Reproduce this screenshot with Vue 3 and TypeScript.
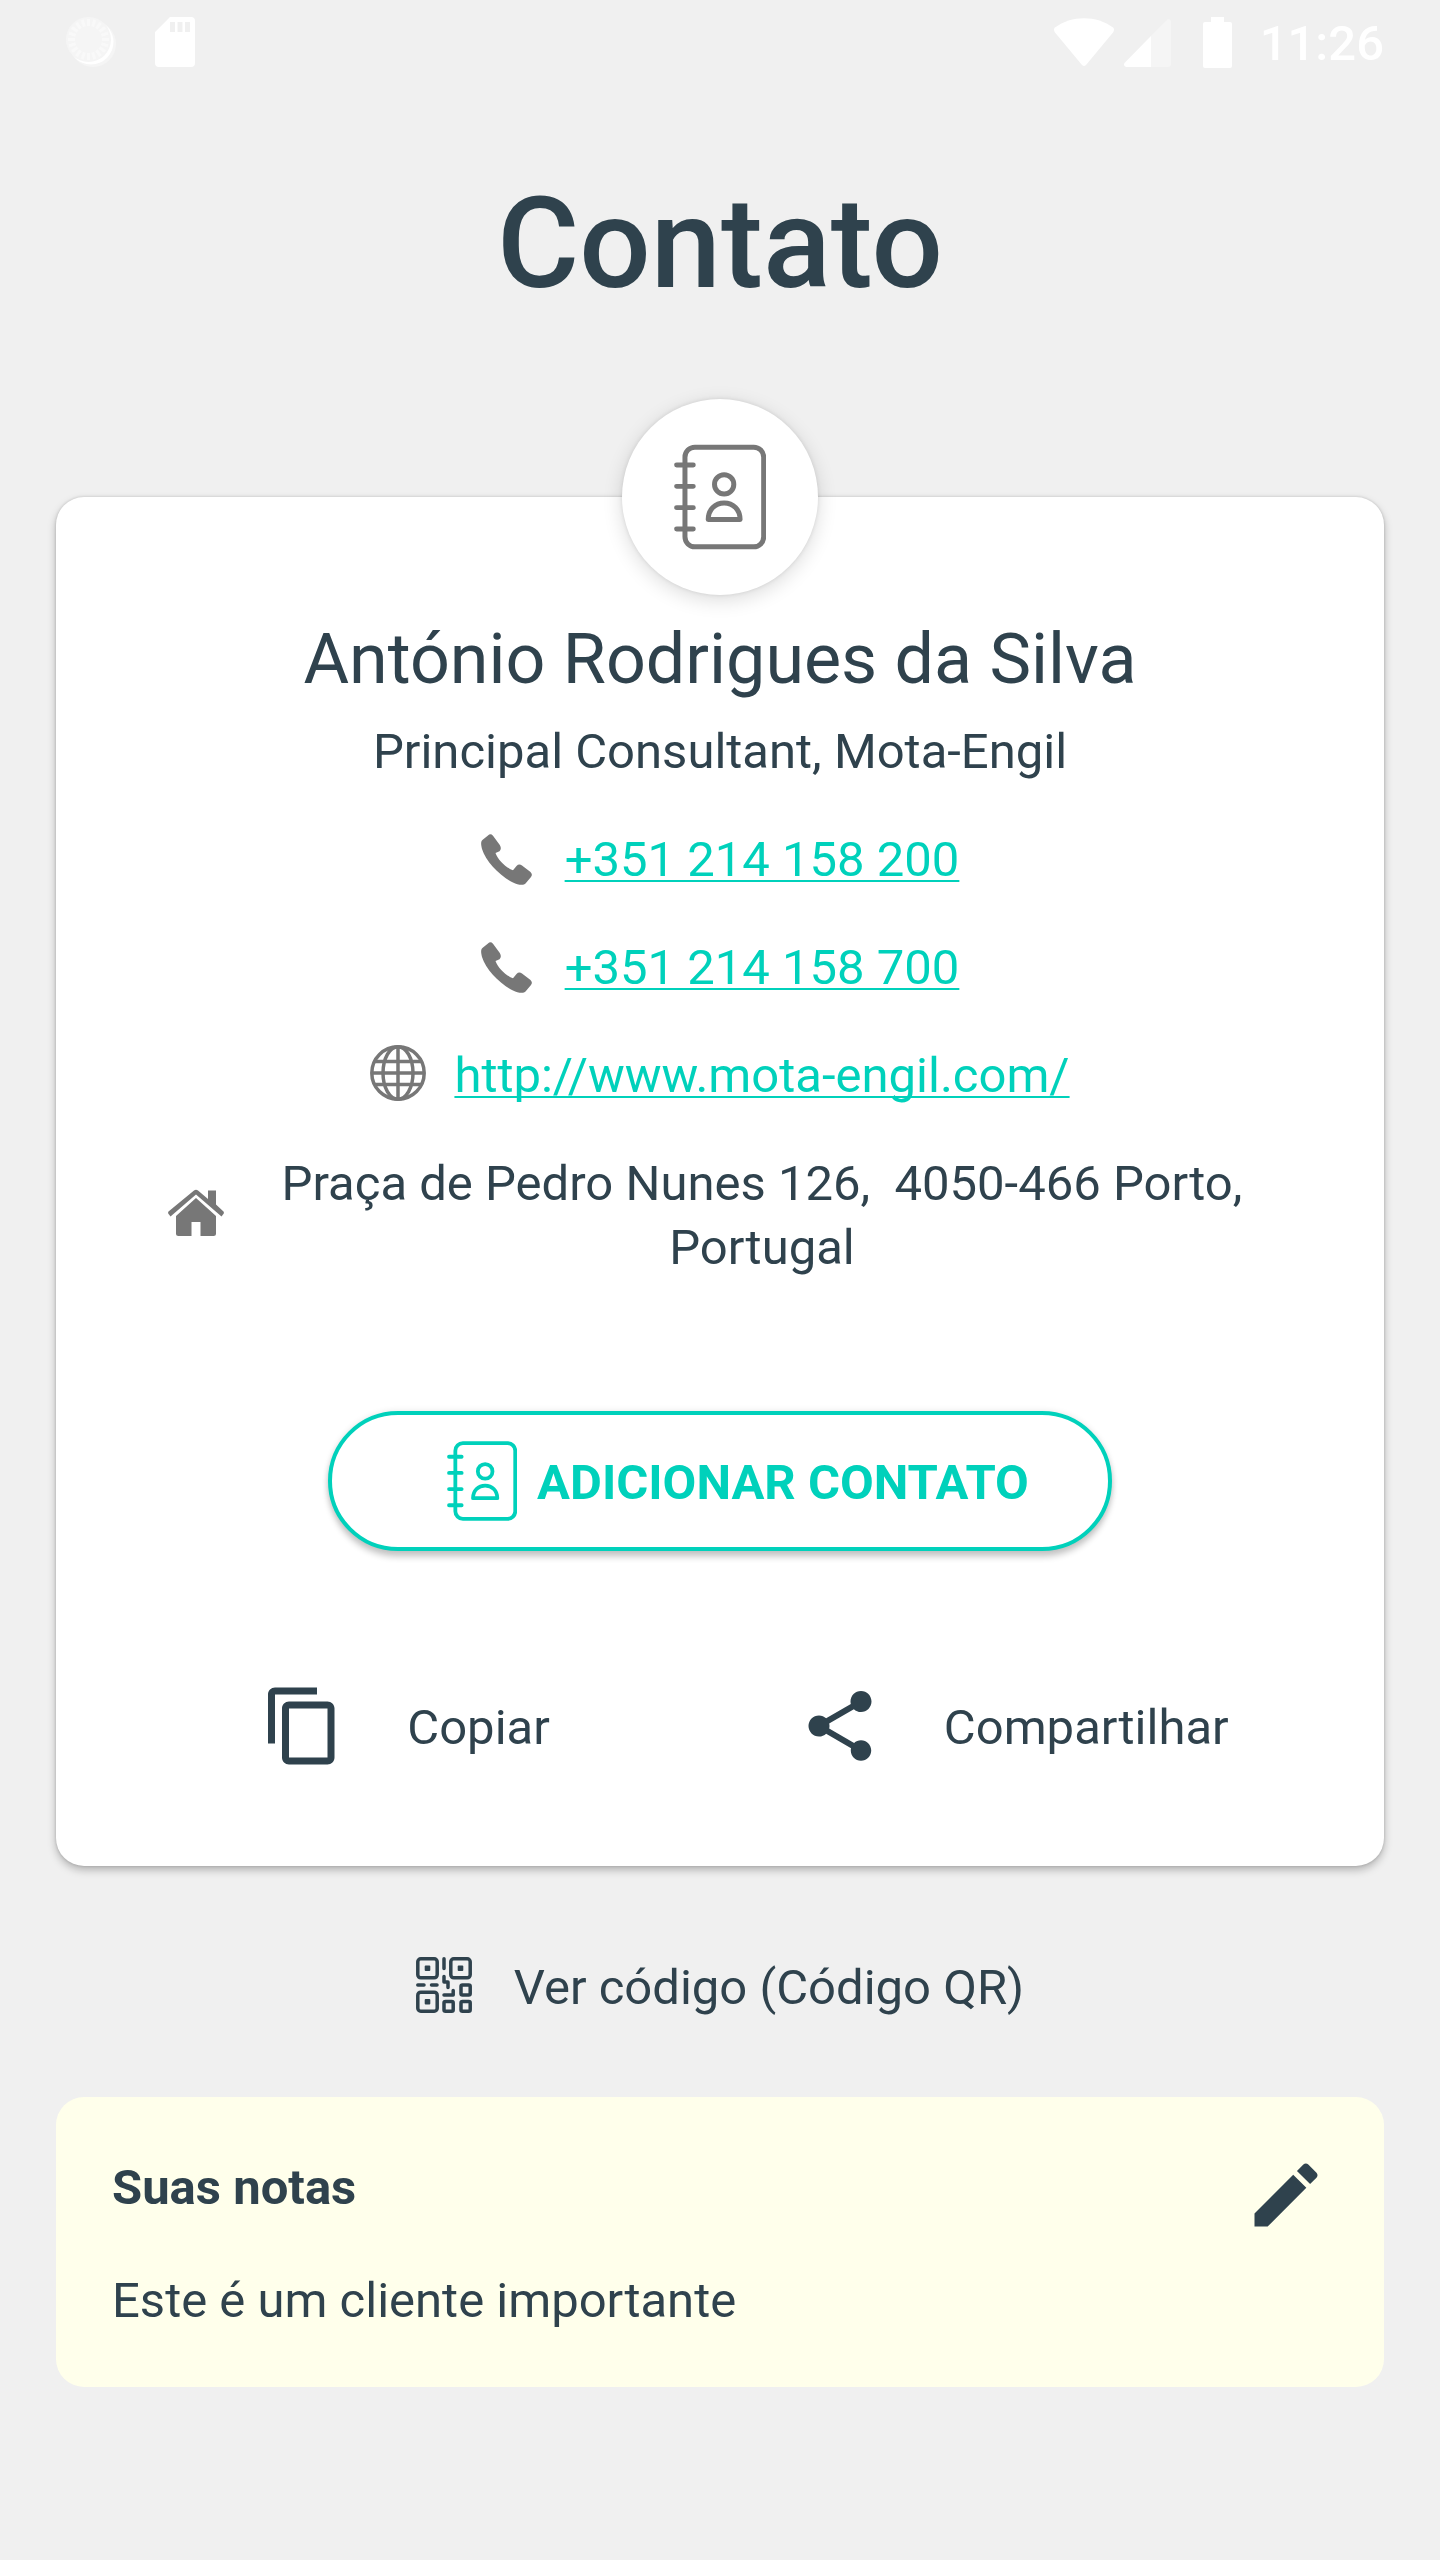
<script setup lang="ts">
import { ref } from 'vue'

interface Phone {
  label: string
  href: string
}

const contact = {
  name: 'António Rodrigues da Silva',
  role: 'Principal Consultant, Mota-Engil',
  website: 'http://www.mota-engil.com/',
  address: 'Praça de Pedro Nunes 126,\u00a0 4050-466 Porto, Portugal',
}

const phones: Phone[] = [
  { label: '+351 214 158 200', href: 'tel:+351214158200' },
  { label: '+351 214 158 700', href: 'tel:+351214158700' },
]

const note = ref('Este é um cliente importante')

// Tick angles of the sync spinner in the status bar
const ticks: number[] = Array.from({ length: 20 }, (_, i) => i * 18)
</script>

<template>
  <div class="screen">
    <header class="status">
      <svg class="spinner" viewBox="0 0 50 50" aria-hidden="true">
        <circle cx="27" cy="27" r="23" fill="#f5f5f5" />
        <circle cx="25" cy="25" r="22.500" fill="#fff" />
        <circle cx="22.500" cy="22.500" r="22.500" fill="#f5f5f5" />
        <path
          v-for="angle in ticks"
          :key="angle"
          d="M22.5 2v7"
          stroke="#f9f9f9"
          stroke-width="3"
          :transform="`rotate(${angle} 22.5 22.5)`"
        />
      </svg>
      <svg class="sd" viewBox="0 0 40 50" aria-hidden="true">
        <path
          fill="#fff"
          fill-rule="evenodd"
          d="M15 0H36Q40 0 40 4V46Q40 50 36 50H4Q0 50 0 46V15ZM15 5V15H20V5ZM22.500 5V15H27.500V5ZM30 5V15H35V5Z"
        />
      </svg>
      <svg class="wifi" viewBox="0 0 60 48" aria-hidden="true">
        <path fill="#fff" d="M1 9.500C17-3 43-3 59 9.500Q61 11.500 59 14.500L32 47Q30 49 28 47L1 14.500Q-1 11.500 1 9.500Z" />
      </svg>
      <svg class="signal" viewBox="0 0 47 48" aria-hidden="true">
        <path fill="#f5f5f5" d="M27 17 44 0Q47 0 47 3V45Q47 48 44 48H27Z" />
        <path fill="#fff" d="M27 17V48H2Q-1 47 .5 44Z" />
      </svg>
      <svg class="battery" viewBox="0 0 29 51" aria-hidden="true">
        <path fill="#fff" d="M8 0H21V5H27Q29 5 29 7V49Q29 51 27 51H2Q0 51 0 49V7Q0 5 2 5H8Z" />
      </svg>
      <time class="clock">11:26</time>
    </header>

    <h1 class="title">Contato</h1>

    <main>
      <section class="card">
        <div class="badge">
          <svg class="badge-icon" viewBox="0 0 277 316" aria-hidden="true">
            <g fill="none" stroke="currentColor" stroke-width="15" stroke-linejoin="round" stroke-linecap="round">
              <rect x="33" y="8" width="237" height="300" rx="30" />
              <path d="M8 62H58M8 126H58M8 190H58M8 254H58" />
              <circle cx="151" cy="120" r="29" />
              <path d="M103 226C103 196 124 176 151 176S199 196 199 226Z" />
            </g>
          </svg>
        </div>

        <h2 class="name">{{ contact.name }}</h2>
        <p class="role">{{ contact.role }}</p>

        <div v-for="phone in phones" :key="phone.href" class="row">
          <svg class="icon" viewBox="0 0 56 56" aria-hidden="true">
            <path
              fill="currentColor"
              d="M7 6.500Q9.500 4 12 6.800L18.800 16Q21 20 18.500 22.200L14.500 24C17 31 24 38 32 41.300L35.500 37Q38 34.500 41 36.500L49.500 43Q52 45.500 50 48L44.500 54.500C43 56.500 37 56.200 32 53.500C19 47 5 33 1 20C-.5 14 0 12 2 10.500Z"
            />
          </svg>
          <a class="link" :href="phone.href">{{ phone.label }}</a>
        </div>

        <div class="row">
          <svg class="icon" viewBox="0 0 56 56" aria-hidden="true">
            <g fill="none" stroke="currentColor" stroke-width="3.500">
              <circle cx="28" cy="28" r="26.200" />
              <ellipse cx="28" cy="28" rx="15" ry="26.200" />
              <path d="M28 1V55M2 28H54M5 16.500H51M5 39.500H51" />
            </g>
          </svg>
          <a class="link" :href="contact.website">{{ contact.website }}</a>
        </div>

        <div class="row">
          <svg class="icon" viewBox="0 0 56 56" aria-hidden="true">
            <g fill="currentColor">
              <path d="M40 5.500H48V19.500L55.500 26.500Q56.500 28 55 29.500L53.500 31.500 28 9.500 2.500 31.500 1 29.500Q-.5 28 .5 26.500L26 5.500Q28 4 30 5.500L40 14Z" />
              <path d="M28 13 48 31V48.500Q48 51 45.500 51H32.500V37H23.500V51H10.500Q8 51 8 48.500V31Z" />
            </g>
          </svg>
          <address class="address">{{ contact.address }}</address>
        </div>

        <button class="add" type="button">
          <svg class="add-icon" viewBox="0 0 277 316" aria-hidden="true">
            <g fill="none" stroke="currentColor" stroke-width="15" stroke-linejoin="round" stroke-linecap="round">
              <rect x="33" y="8" width="237" height="300" rx="30" />
              <path d="M8 62H58M8 126H58M8 190H58M8 254H58" />
              <circle cx="151" cy="120" r="29" />
              <path d="M103 226C103 196 124 176 151 176S199 196 199 226Z" />
            </g>
          </svg>
          <span>ADICIONAR CONTATO</span>
        </button>

        <div class="actions">
          <button class="action" type="button">
            <svg class="action-icon" viewBox="0 0 24 24" aria-hidden="true">
              <path
                fill="currentColor"
                d="M16 1H4c-1.100 0-2 .9-2 2v14h2V3h12V1zm3 4H8c-1.100 0-2 .9-2 2v14c0 1.100.9 2 2 2h11c1.100 0 2-.9 2-2V7c0-1.100-.9-2-2-2zm0 16H8V7h11v14z"
              />
            </svg>
            <span>Copiar</span>
          </button>
          <button class="action" type="button">
            <svg class="action-icon" viewBox="0 0 24 24" aria-hidden="true">
              <path
                fill="currentColor"
                d="M18 16.080c-.76 0-1.440.3-1.960.77L8.910 12.700c.05-.23.09-.46.09-.7s-.04-.47-.09-.7l7.050-4.110c.54.5 1.250.81 2.040.81 1.660 0 3-1.340 3-3s-1.340-3-3-3-3 1.340-3 3c0 .24.04.47.09.7L8.040 9.810C7.500 9.310 6.790 9 6 9c-1.660 0-3 1.340-3 3s1.340 3 3 3c.79 0 1.500-.31 2.040-.81l7.120 4.160c-.05.21-.08.43-.08.65 0 1.610 1.310 2.920 2.920 2.920 1.610 0 2.920-1.310 2.920-2.920s-1.310-2.920-2.920-2.920z"
              />
            </svg>
            <span>Compartilhar</span>
          </button>
        </div>
      </section>

      <button class="qr" type="button">
        <svg class="icon qr-icon" viewBox="0 0 56 56" aria-hidden="true">
          <g fill="none" stroke="currentColor" stroke-width="3.500" stroke-linecap="round" stroke-linejoin="round">
            <rect x="1.800" y="1.800" width="19.400" height="19" rx="3" />
            <rect x="34.800" y="1.800" width="19.400" height="19" rx="3" />
            <rect x="1.800" y="35.200" width="19.400" height="19" rx="3" />
            <rect x="45" y="28" width="9.200" height="10" rx="1.500" />
            <rect x="28" y="44.500" width="9.200" height="9.700" rx="1.500" />
            <rect x="45" y="44.500" width="9.200" height="9.700" rx="1.500" />
            <path d="M28 1.800V11.500M1.800 28H8M15.500 28H21M28 19.500V25H32V30.500M28 38H37.200V33.500" />
          </g>
          <rect x="8.700" y="8.500" width="5.600" height="5.600" rx="1" fill="currentColor" />
          <rect x="41.700" y="8.500" width="5.600" height="5.600" rx="1" fill="currentColor" />
          <rect x="8.700" y="42" width="5.600" height="5.600" rx="1" fill="currentColor" />
        </svg>
        <span>Ver código (Código QR)</span>
      </button>

      <section class="notes">
        <div class="notes-head">
          <h3 class="notes-title">Suas notas</h3>
          <button class="edit" type="button" aria-label="Editar notas">
            <svg class="edit-icon" viewBox="0 0 24 24" aria-hidden="true">
              <path
                fill="currentColor"
                d="M3 17.250V21h3.750L17.810 9.940l-3.750-3.750L3 17.250zM20.710 7.040c.39-.39.39-1.020 0-1.410l-2.340-2.340c-.39-.39-1.020-.39-1.410 0l-1.830 1.830 3.750 3.750 1.830-1.830z"
              />
            </svg>
          </button>
        </div>
        <p class="notes-text">{{ note }}</p>
      </section>
    </main>
  </div>
</template>

<style>
body {
  margin: 0;
  background: #f0f0f0;
}
</style>

<style scoped>
.screen {
  min-height: 100vh;
  background: #f0f0f0;
  color: #2f424d;
  font-family: Roboto, 'Liberation Sans', sans-serif;
  font-size: 49px;
  line-height: 64px;
}

h1,
h2,
h3,
p {
  margin: 0;
}

button {
  padding: 0;
  border: 0;
  background: none;
  color: inherit;
  font: inherit;
  cursor: pointer;
}

svg {
  display: block;
  flex: none;
}

/* Status bar */
.status {
  display: flex;
  align-items: center;
  height: 84px;
  padding: 0 56px 0 66px;
  color: #fff;
}

.spinner {
  width: 50px;
  height: 50px;
  margin-right: 39px;
}

.sd {
  width: 40px;
  height: 50px;
}

.wifi {
  width: 60px;
  height: 48px;
  margin: 0 10px 0 auto;
}

.signal {
  width: 47px;
  height: 48px;
  margin-top: 2px;
}

.battery {
  width: 29px;
  height: 51px;
  margin: 0 28px 0 32px;
}

.clock {
  font-weight: 500;
  margin-top: 4px;
}

.title {
  margin-top: 86px;
  font-size: 126px;
  font-weight: 500;
  line-height: 148px;
  text-align: center;
}

/* Contact card */
.card {
  position: relative;
  display: flex;
  flex-direction: column;
  align-items: center;
  margin: 179px 56px 0;
  padding: 120px 112px 94px;
  border-radius: 28px;
  background: #fff;
  box-shadow: 0 4px 8px rgba(0, 0, 0, 0.26), 0 0 3px rgba(0, 0, 0, 0.16);
}

.badge {
  position: absolute;
  top: -98px;
  display: flex;
  align-items: center;
  justify-content: center;
  width: 196px;
  height: 196px;
  border-radius: 50%;
  background: #fff;
  color: #777;
  box-shadow: 0 5px 20px rgba(0, 0, 0, 0.14), 0 0 4px rgba(0, 0, 0, 0.1);
}

.badge-icon {
  width: 92px;
  height: 106px;
}

.name {
  font-size: 70px;
  font-weight: 400;
  line-height: 84px;
  text-align: center;
}

.role {
  margin-top: 19px;
  text-align: center;
}

.row {
  display: flex;
  align-items: center;
  align-self: stretch;
  justify-content: center;
  gap: 28px;
  margin-top: 44px;
}

.icon {
  width: 56px;
  height: 56px;
  margin-bottom: 6px;
  color: #777;
}

.link {
  color: #00d1bb;
  text-decoration: underline 2px;
  text-decoration-skip-ink: none;
  text-underline-offset: 4px;
}

.address {
  flex: 1;
  font-style: normal;
  text-align: center;
}

.add {
  display: flex;
  align-items: center;
  justify-content: center;
  gap: 20px;
  box-sizing: border-box;
  width: 784px;
  max-width: 100%;
  height: 140px;
  margin-top: 131px;
  padding: 4px 0 0 36px;
  border: 4px solid #00d1bb;
  border-radius: 70px;
  background: #fff;
  color: #00d1bb;
  font-weight: 700;
  box-shadow: 0 6px 6px rgba(0, 0, 0, 0.2), 0 0 6px rgba(0, 0, 0, 0.1);
}

.add-icon {
  width: 70px;
  height: 80px;
  margin-bottom: 4px;
}

.actions {
  display: flex;
  justify-content: center;
  gap: 248px;
  margin-top: 133px;
  padding-left: 50px;
}

.action {
  display: flex;
  align-items: center;
  gap: 62px;
}

.action-icon {
  width: 84px;
  height: 84px;
  margin-bottom: 4px;
}

/* QR code */
.qr {
  display: flex;
  align-items: center;
  gap: 42px;
  margin: 90px auto 77px;
}

.qr-icon {
  color: inherit;
}

/* Notes */
.notes {
  margin: 0 56px;
  padding: 56px 56px 51px;
  border-radius: 28px;
  background: #ffffeb;
  line-height: 70px;
}

.notes-head {
  display: flex;
  align-items: flex-start;
  justify-content: space-between;
}

.notes-title {
  font-size: 49px;
  font-weight: 700;
}

.edit-icon {
  width: 84px;
  height: 84px;
}

.notes-text {
  margin-top: 29px;
}
</style>
